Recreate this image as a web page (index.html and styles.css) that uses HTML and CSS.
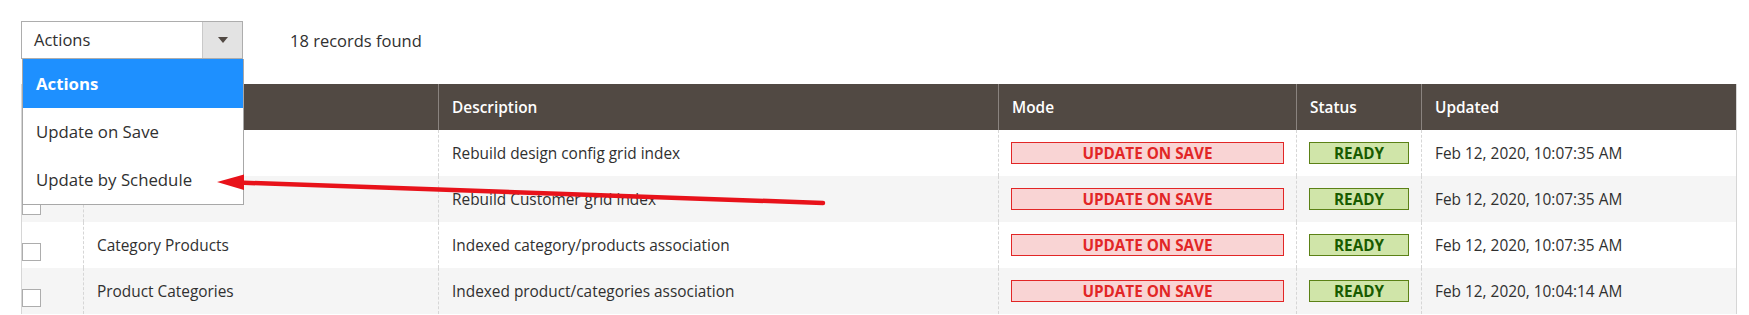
FILE: index.html
```html
<!DOCTYPE html>
<html lang="en">
<head>
<meta charset="utf-8">
<title>Index Management</title>
<link rel="stylesheet" href="styles.css">
</head>
<body>
<div class="toolbar">
  <div class="actions">
    <div class="select">
      <span class="select-label">Actions</span>
      <span class="select-btn"><span class="caret"></span></span>
    </div>
    <ul class="menu">
      <li class="menu-item selected">Actions</li>
      <li class="menu-item">Update on Save</li>
      <li class="menu-item">Update by Schedule</li>
    </ul>
  </div>
  <span class="records">18 records found</span>
</div>

<div class="grid">
  <div class="row head">
    <div class="cell"></div>
    <div class="cell">Indexer</div>
    <div class="cell">Description</div>
    <div class="cell">Mode</div>
    <div class="cell">Status</div>
    <div class="cell">Updated</div>
  </div>
  <div class="row">
    <div class="cell check"><span class="box"></span></div>
    <div class="cell">Design Config Grid</div>
    <div class="cell">Rebuild design config grid index</div>
    <div class="cell badge-cell"><span class="badge critical">UPDATE ON SAVE</span></div>
    <div class="cell badge-cell"><span class="badge notice">READY</span></div>
    <div class="cell">Feb 12, 2020, 10:07:35 AM</div>
  </div>
  <div class="row alt">
    <div class="cell check"><span class="box"></span></div>
    <div class="cell">Customer Grid</div>
    <div class="cell">Rebuild Customer grid index</div>
    <div class="cell badge-cell"><span class="badge critical">UPDATE ON SAVE</span></div>
    <div class="cell badge-cell"><span class="badge notice">READY</span></div>
    <div class="cell">Feb 12, 2020, 10:07:35 AM</div>
  </div>
  <div class="row">
    <div class="cell check"><span class="box"></span></div>
    <div class="cell">Category Products</div>
    <div class="cell">Indexed category/products association</div>
    <div class="cell badge-cell"><span class="badge critical">UPDATE ON SAVE</span></div>
    <div class="cell badge-cell"><span class="badge notice">READY</span></div>
    <div class="cell">Feb 12, 2020, 10:07:35 AM</div>
  </div>
  <div class="row alt">
    <div class="cell check"><span class="box"></span></div>
    <div class="cell">Product Categories</div>
    <div class="cell">Indexed product/categories association</div>
    <div class="cell badge-cell"><span class="badge critical">UPDATE ON SAVE</span></div>
    <div class="cell badge-cell"><span class="badge notice">READY</span></div>
    <div class="cell">Feb 12, 2020, 10:04:14 AM</div>
  </div>
</div>

<svg class="arrow" width="1749" height="315" viewBox="0 0 1749 315" aria-hidden="true">
  <line x1="823" y1="203" x2="238" y2="182.5" stroke="#e8121a" stroke-width="4.5" stroke-linecap="round"/>
  <polygon points="217,182 244,174.5 244,190" fill="#e8121a"/>
</svg>
</body>
</html>
```
FILE: styles.css
```css
* { box-sizing: border-box; }
html, body { margin: 0; padding: 0; background: #fff; }
body {
  font-family: "Open Sans", "Liberation Sans", sans-serif;
  font-size: 15.4px;
  color: #303030;
  width: 1749px;
  height: 315px;
  overflow: hidden;
  position: relative;
}
.toolbar {
  display: flex;
  align-items: center;
  padding: 21px 0 0 21px;
  height: 59px;
  font-size: 16.5px;
}
.actions { position: relative; width: 222px; height: 38px; }
.select {
  display: flex;
  height: 38px;
  border: 1px solid #adadad;
  background: #fff;
}
.select-label { flex: 1; padding-left: 12px; line-height: 36px; }
.select-btn {
  width: 40px;
  background: #e3e3e3;
  border-left: 1px solid #c9c9c9;
  display: flex;
  align-items: center;
  justify-content: center;
}
.caret {
  width: 0; height: 0;
  border-left: 5px solid transparent;
  border-right: 5px solid transparent;
  border-top: 6px solid #514943;
}
.records { margin-left: 47px; }
.menu {
  position: absolute;
  z-index: 5;
  top: 38px;
  left: 1px;
  width: 222px;
  margin: 0;
  padding: 0;
  list-style: none;
  background: #fff;
  border: 1px solid #a8a8a8;
  border-top: 0;
  font-size: 16.8px;
}
.menu-item {
  height: 48px;
  line-height: 48px;
  padding-left: 13px;
}
.menu-item.selected {
  height: 49px;
  line-height: 49px;
  background: #1e90ff;
  color: #fff;
  font-weight: 700;
}
.grid {
  margin: 25px 0 0 21px;
  width: 1716px;
  border-left: 1px solid #d6d6d6;
  border-right: 1px solid #d6d6d6;
}
.row {
  display: grid;
  grid-template-columns: 61px 355px 560px 298px 125px 315px;
  height: 46px;
}
.row.alt { background: #f5f5f5; }
.cell {
  display: flex;
  align-items: center;
  padding-left: 13px;
  border-left: 1px dashed #d6d6d6;
  white-space: nowrap;
}
.cell:first-child { border-left: 0; }
.head { background: #514943; color: #fff; font-weight: 600; }
.head .cell { border-left: 1px solid #8a837f; }
.head .cell:first-child { border-left: 0; }
.check { padding: 0; align-items: flex-start; }
.box {
  display: block;
  width: 19px;
  height: 18px;
  margin-top: 21px;
  border: 1px solid #adadad;
  background: #fff;
}
.badge-cell { padding: 0 12px; }
.badge {
  flex: 1;
  height: 22px;
  line-height: 20px;
  text-align: center;
  font-weight: 700;
  font-size: 15.25px;
}
.critical { background: #f9d4d4; border: 1px solid #e22626; color: #e22626; }
.notice { background: #d0e5a9; border: 1px solid #5b8116; color: #185b00; }
.arrow { position: absolute; left: 0; top: 0; pointer-events: none; z-index: 10; }
```
